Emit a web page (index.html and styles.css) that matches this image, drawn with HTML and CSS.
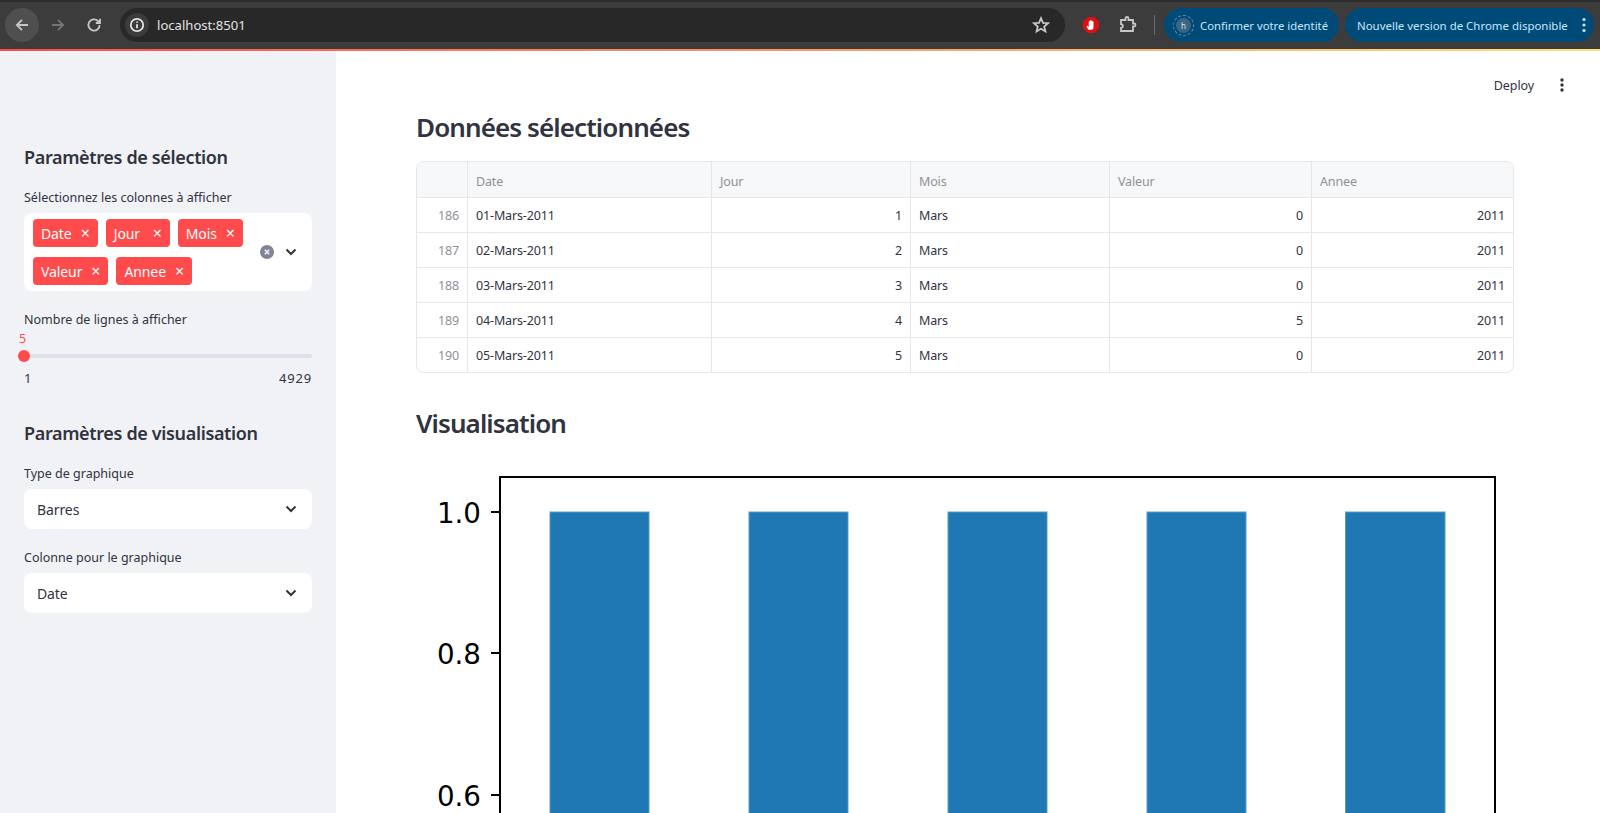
FILE: index.html
```html
<!DOCTYPE html>
<html lang="fr">
<head>
    <meta charset="UTF-8">
    <title>localhost:8501</title>
    <link rel="stylesheet" href="styles.css">
</head>
<body>
    <header class="browser">
        <div class="nav-btn nav-btn-active">
            <svg width="18" height="18" viewBox="0 0 18 18"><path d="M15 9H4M9 3.8 3.8 9 9 14.2" class="ico"/></svg>
        </div>
        <div class="nav-btn nav-btn-off">
            <svg width="18" height="18" viewBox="0 0 18 18"><path d="M3 9h11M9 3.8 14.2 9 9 14.2" class="ico"/></svg>
        </div>
        <div class="nav-btn">
            <svg width="18" height="18" viewBox="0 0 18 18"><path d="M14.6 9a5.6 5.6 0 1 1-1.7-4L15 7M15 2.8V7h-4.2" class="ico"/></svg>
        </div>
        <div class="omnibox">
            <span class="site-info">
                <svg width="16" height="16" viewBox="0 0 16 16"><circle cx="8" cy="8" r="6.2" class="ico"/><path d="M8 7.2v4M8 4.4v1.4" class="ico"/></svg>
            </span>
            <span class="url">localhost:8501</span>
            <svg class="star" width="18" height="18" viewBox="0 0 18 18"><path d="m9 2.2 2 4.6 5 .4-3.8 3.3 1.2 4.9L9 12.8l-4.4 2.6 1.2-4.9L2 7.2l5-.4z" class="ico"/></svg>
        </div>
        <svg class="ext-stop" width="16" height="16" viewBox="0 0 16 16">
            <path d="M4.8 0h6.4L16 4.8v6.4L11.2 16H4.8L0 11.2V4.8z" fill="#e01010"/>
            <path d="M5.2 12.8 3.500 9.300l.9-.5 1.300 1.500V4.800a.6.6 0 0 1 1.200 0V3.600a.6.6 0 0 1 1.200 0v.4a.6.6 0 0 1 1.200 0v.8a.6.6 0 0 1 1.200 0v5.700c0 1.300-.9 2.300-2.200 2.300z" fill="#fff"/>
        </svg>
        <svg class="ext-puzzle" width="20" height="20" viewBox="0 0 20 20"><path d="M3 5h4.500V3.500a1.500 1.500 0 0 1 3 0V5H15v3.500h1a1.500 1.500 0 0 1 0 3h-1V16H3v-3.200c1 0 1.800-.8 1.800-1.800S4 9.200 3 9.200z" class="ico"/></svg>
        <span class="bar-sep"></span>
        <div class="pill pill-profile">
            <span class="avatar">h</span>
            <span>Confirmer votre identité</span>
        </div>
        <div class="pill pill-update">
            <span>Nouvelle version de Chrome disponible</span>
            <svg width="4" height="16" viewBox="0 0 4 16"><circle cx="2" cy="2.5" r="1.6"/><circle cx="2" cy="8" r="1.6"/><circle cx="2" cy="13.5" r="1.6"/></svg>
        </div>
    </header>
    <div class="deco-line"></div>

    <div class="app">
        <aside class="sidebar">
            <h3 class="side-title">Paramètres de sélection</h3>
            <label class="field-label">Sélectionnez les colonnes à afficher</label>
            <div class="multiselect">
                <div class="tags">
                    <span class="tag">Date <i class="tag-x">×</i></span>
                    <span class="tag">Jour <i class="tag-x">×</i></span>
                    <span class="tag">Mois <i class="tag-x">×</i></span>
                    <span class="tag">Valeur <i class="tag-x">×</i></span>
                    <span class="tag">Annee <i class="tag-x">×</i></span>
                </div>
                <svg class="clear-all" width="14" height="14" viewBox="0 0 14 14"><circle cx="7" cy="7" r="7" fill="#808495"/><path d="M4.800 4.800l4.400 4.400M9.200 4.800 4.800 9.200" stroke="#f0f2f6" stroke-width="1.6"/></svg>
                <svg class="chevron" width="12" height="8" viewBox="0 0 12 8"><path d="M1.500 1.500 6 6l4.500-4.500" fill="none" stroke="#31333f" stroke-width="2"/></svg>
            </div>

            <label class="field-label label-slider">Nombre de lignes à afficher</label>
            <div class="slider">
                <span class="slider-value">5</span>
                <div class="slider-track"><span class="slider-thumb"></span></div>
                <div class="slider-ends"><span>1</span><span>4929</span></div>
            </div>

            <h3 class="side-title title-second">Paramètres de visualisation</h3>
            <label class="field-label label-type">Type de graphique</label>
            <div class="select">
                <span>Barres</span>
                <svg class="chevron" width="12" height="8" viewBox="0 0 12 8"><path d="M1.500 1.500 6 6l4.500-4.500" fill="none" stroke="#31333f" stroke-width="2"/></svg>
            </div>
            <label class="field-label label-second">Colonne pour le graphique</label>
            <div class="select">
                <span>Date</span>
                <svg class="chevron" width="12" height="8" viewBox="0 0 12 8"><path d="M1.500 1.500 6 6l4.500-4.500" fill="none" stroke="#31333f" stroke-width="2"/></svg>
            </div>
        </aside>

        <main class="main">
            <div class="toolbar">
                <span class="deploy">Deploy</span>
                <svg width="4" height="14" viewBox="0 0 4 14"><circle cx="2" cy="2" r="1.7"/><circle cx="2" cy="7" r="1.7"/><circle cx="2" cy="12" r="1.7"/></svg>
            </div>
            <h2 class="page-title">Données sélectionnées</h2>
            <table class="data-table">
                <colgroup>
                    <col class="col-index"><col class="col-date"><col class="col-jour">
                    <col class="col-mois"><col class="col-valeur"><col class="col-annee">
                </colgroup>
                <thead>
                    <tr><th></th><th>Date</th><th>Jour</th><th>Mois</th><th>Valeur</th><th>Annee</th></tr>
                </thead>
                <tbody>
                    <tr><td class="idx">186</td><td>01-Mars-2011</td><td class="num">1</td><td>Mars</td><td class="num">0</td><td class="num">2011</td></tr>
                    <tr><td class="idx">187</td><td>02-Mars-2011</td><td class="num">2</td><td>Mars</td><td class="num">0</td><td class="num">2011</td></tr>
                    <tr><td class="idx">188</td><td>03-Mars-2011</td><td class="num">3</td><td>Mars</td><td class="num">0</td><td class="num">2011</td></tr>
                    <tr><td class="idx">189</td><td>04-Mars-2011</td><td class="num">4</td><td>Mars</td><td class="num">5</td><td class="num">2011</td></tr>
                    <tr><td class="idx">190</td><td>05-Mars-2011</td><td class="num">5</td><td>Mars</td><td class="num">0</td><td class="num">2011</td></tr>
                </tbody>
            </table>

            <h2 class="page-title title-chart">Visualisation</h2>
            <svg class="chart" width="1098" height="350" viewBox="0 0 1098 350">
                <g fill="#1f77b4" stroke="#5a9bc9" stroke-width="1">
                    <rect x="134" y="49" width="99" height="320"/>
                    <rect x="333" y="49" width="99" height="320"/>
                    <rect x="532" y="49" width="99" height="320"/>
                    <rect x="731" y="49" width="99" height="320"/>
                    <rect x="929.5" y="49" width="99.5" height="320"/>
                </g>
                <path d="M84 370V14H1079V370" fill="none" stroke="#000" stroke-width="2"/>
                <path d="M75 49h9M75 190h9M75 332h9" stroke="#000" stroke-width="2"/>
                <g class="tick-labels">
                    <text x="65" y="60">1.0</text>
                    <text x="65" y="201">0.8</text>
                    <text x="65" y="343">0.6</text>
                </g>
            </svg>
        </main>
    </div>
</body>
</html>
```

FILE: styles.css
```css
* {
    box-sizing: border-box;
}

html, body {
    height: 813px;
    margin: 0;
    overflow: hidden;
}

body {
    font-family: "Noto Sans", sans-serif;
    color: #31333f;
    background: white;
}

/* browser bar */
.browser {
    display: flex;
    align-items: center;
    height: 49px;
    padding: 0 0 1px 5px;
    background: #3c3c3c;
    border-top: 2px solid #2b2b2b;
}

.ico {
    fill: none;
    stroke: currentColor;
    stroke-width: 1.8;
}

.nav-btn {
    display: flex;
    align-items: center;
    justify-content: center;
    width: 34px;
    height: 34px;
    border-radius: 50%;
    margin-right: 2px;
    color: #c7c7c7;
}

.nav-btn-active {
    background: #4f4f4f;
}

.nav-btn-off {
    color: #757575;
}

.omnibox {
    display: flex;
    align-items: center;
    width: 945px;
    height: 34px;
    margin-left: 7px;
    padding: 0 15px 0 5px;
    border-radius: 17px;
    background: #282828;
    color: #c7c7c7;
}

.site-info {
    display: flex;
    align-items: center;
    justify-content: center;
    width: 24px;
    height: 24px;
    border-radius: 50%;
    background: #3c3c3c;
    color: #e3e3e3;
}

.url {
    flex: 1;
    margin-left: 8px;
    font-size: 13.1px;
    color: #e3e3e3;
}

.ext-stop {
    margin-left: 18px;
}

.ext-puzzle {
    margin-left: 19px;
    color: #c7c7c7;
}

.bar-sep {
    width: 1px;
    height: 20px;
    margin: 0 9px 0 16px;
    background: #6a6a6a;
}

.pill {
    display: flex;
    align-items: center;
    height: 34px;
    border-radius: 17px;
    background: #004a77;
    color: #c2e7ff;
    font-size: 11.3px;
}

.pill-profile {
    width: 175px;
    padding-left: 10px;
    gap: 7px;
}

.pill-update {
    width: 249px;
    margin-left: 6px;
    padding: 0 8px 0 12px;
    justify-content: space-between;
    font-size: 11.45px;
}

.pill-update svg {
    fill: #c2e7ff;
}

.avatar {
    display: flex;
    align-items: center;
    justify-content: center;
    width: 15px;
    height: 15px;
    border-radius: 50%;
    background: #3d6480;
    outline: 1px dashed #6e93ad;
    outline-offset: 2px;
    font-size: 8px;
    margin: 0 2px;
}

.deco-line {
    height: 2px;
    background: linear-gradient(90deg, #ff4b4b, #ffe27a);
}

/* app */
.app {
    display: flex;
    height: 762px;
}

.sidebar {
    width: 336px;
    flex-shrink: 0;
    padding: 92px 24px 0;
    background: #f0f2f6;
}

.side-title {
    margin: 0;
    font-size: 18px;
    font-weight: 600;
    line-height: 28px;
    letter-spacing: -0.35px;
}

.title-second {
    margin-top: 33px;
}

.field-label {
    display: block;
    margin-top: 16px;
    font-size: 12.5px;
    line-height: 22px;
}

.label-slider,
.label-second {
    margin-top: 18px;
}

.multiselect {
    display: flex;
    align-items: center;
    height: 78px;
    margin-top: 4px;
    padding: 0 15px 0 9px;
    border-radius: 8px;
    background: white;
}

.tags {
    display: flex;
    flex-wrap: wrap;
    align-content: center;
    gap: 10px 8px;
    width: 226px;
}

.tag {
    display: flex;
    align-items: center;
    justify-content: space-between;
    gap: 9px;
    min-width: 64px;
    height: 28px;
    padding: 0 8px;
    border-radius: 4px;
    background: #ff4b4b;
    color: white;
    font-size: 14px;
    letter-spacing: -0.1px;
}

.tag-x {
    font-style: normal;
    font-size: 16px;
}

.clear-all {
    margin-left: 1px;
}

.multiselect .chevron {
    margin-left: 11px;
}

.slider {
    display: flex;
    flex-direction: column;
}

.slider-value {
    margin: -1px 0 0 -5px;
    height: 18px;
    font-size: 12.5px;
    line-height: 18px;
    color: #ff4b4b;
}

.slider-track {
    position: relative;
    height: 4px;
    margin-top: 6px;
    border-radius: 2px;
    background: #dde1ea;
}

.slider-thumb {
    position: absolute;
    left: -6px;
    top: -4px;
    width: 12px;
    height: 12px;
    border-radius: 50%;
    background: #ff4b4b;
}

.slider-ends {
    display: flex;
    justify-content: space-between;
    margin-top: 12px;
    font-size: 13px;
    line-height: 16px;
    letter-spacing: 0.8px;
}

.select {
    display: flex;
    align-items: center;
    justify-content: space-between;
    height: 40px;
    margin-top: 4px;
    padding: 0 15px 0 13px;
    border-radius: 8px;
    background: white;
    font-size: 14px;
    letter-spacing: -0.1px;
}

.main {
    flex: 1;
    padding: 0 86px 0 80px;
    overflow: hidden;
}

.toolbar {
    display: flex;
    align-items: center;
    justify-content: flex-end;
    gap: 26px;
    height: 20px;
    margin: 24px -50px 0 0;
}

.deploy {
    font-size: 12.5px;
    letter-spacing: -0.1px;
}

.toolbar svg {
    fill: #31333f;
}

.page-title {
    margin: 13px 0 0;
    font-size: 26px;
    font-weight: 600;
    line-height: 38px;
    letter-spacing: -0.9px;
}

.title-chart {
    margin-top: 31px;
}

.data-table {
    width: 1098px;
    margin-top: 15px;
    table-layout: fixed;
    border-collapse: separate;
    border-spacing: 0;
    font-size: 12.5px;
    border: 1px solid #e6e7ea;
    border-radius: 8px;
}

.col-index { width: 50px; }
.col-date { width: 244px; }
.col-jour { width: 199px; }
.col-mois { width: 199px; }
.col-valeur { width: 202px; }
.col-annee { width: 202px; }

.data-table th,
.data-table td {
    height: 35px;
    padding: 0 8px;
    border-left: 1px solid #e6e7ea;
    border-top: 1px solid #e6e7ea;
    font-weight: 400;
    text-align: left;
    letter-spacing: -0.15px;
}

.data-table th {
    padding-top: 4px;
    border-top: none;
    background: #f7f8fa;
    color: #8f9098;
}

.data-table th:first-child {
    border-top-left-radius: 8px;
}

.data-table th:last-child {
    border-top-right-radius: 8px;
}

.data-table th:first-child,
.data-table td:first-child {
    border-left: none;
}

.data-table .num {
    text-align: right;
}

.data-table .idx {
    text-align: right;
    color: #8f9098;
}

.chart {
    display: block;
    margin-top: 21px;
}

.tick-labels text {
    font-family: "DejaVu Sans", sans-serif;
    font-size: 27.7px;
    text-anchor: end;
    fill: #000;
}
```
